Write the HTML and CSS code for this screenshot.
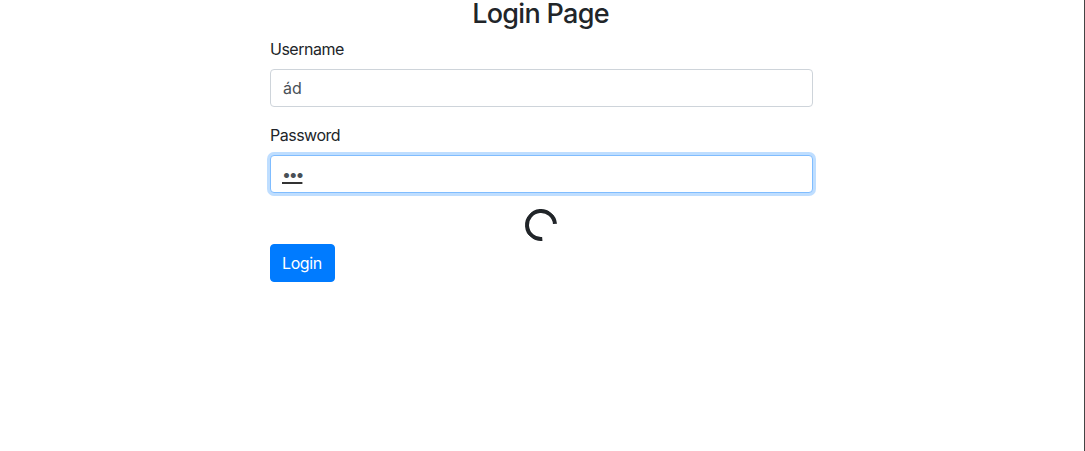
FILE: index.html
```html
<!DOCTYPE html>
<html>
    <head>
        <title>Login Page</title>
        <meta name="viewport" content="width=device-width, initial-scale=1">
        <link rel="stylesheet" href="styles.css">
    </head>
    <body>
        <div class="container">
            <h3 class="title">Login Page</h3>
            <form>
                <div class="form-group">
                    <label for="username">Username</label>
                    <input class="form-control" id="username" type="text" value="ád">
                </div>
                <div class="form-group">
                    <label for="password">Password</label>
                    <input class="form-control focused" id="password" type="password" value="abc">
                </div>
                <div class="loading">
                    <div class="spinner"></div>
                </div>
                <button class="btn" type="button">Login</button>
            </form>
        </div>
    </body>
</html>
```

FILE: styles.css
```css
html, body{
    height: 100%;
}
body{
    margin: 0;
    box-sizing: border-box;
    border-right: 1px solid #444444;
    background-color: #ffffff;
    color: #212529;
    font-family: Inter, "Liberation Sans", sans-serif;
    font-size: 16px;
    line-height: 24px;
}
.container{
    width: 543px;
    margin-left: 270px;
}
.title{
    margin: 0 0 8px 0;
    padding-right: 2px;
    padding-bottom: 2px;
    font-size: 27px;
    font-weight: 500;
    letter-spacing: -.7px;
    line-height: 27px;
    text-align: center;
}
.form-group{
    margin-bottom: 16px;
}
label{
    display: block;
    margin-bottom: 8px;
    letter-spacing: -.5px;
}
.form-control{
    display: block;
    box-sizing: border-box;
    width: 100%;
    height: 38px;
    padding: 6px 12px;
    border: 1px solid #ced4da;
    border-radius: 4px;
    color: #495057;
    font-family: inherit;
    font-size: 16px;
    line-height: 24px;
    outline: none;
}
.focused{
    padding-left: 11px;
    border-color: #80bdff;
    box-shadow: 0 0 0 3px rgba(0, 123, 255, .25);
    letter-spacing: -2.2px;
    text-decoration: underline 2px #333333;
    text-underline-offset: 2px;
}
.loading{
    display: flex;
    justify-content: center;
    margin-bottom: 3px;
    padding-right: 1px;
}
.spinner{
    box-sizing: border-box;
    width: 32px;
    height: 32px;
    border: 4px solid #212529;
    border-right-color: transparent;
    border-radius: 50%;
    transform: rotate(40deg);
}
.btn{
    display: block;
    height: 38px;
    padding: 6px 12px 6px 11px;
    border: 1px solid #007bff;
    border-radius: 4px;
    background-color: #007bff;
    color: #ffffff;
    font-family: inherit;
    font-size: 16px;
    letter-spacing: -.4px;
    line-height: 24px;
}
```
